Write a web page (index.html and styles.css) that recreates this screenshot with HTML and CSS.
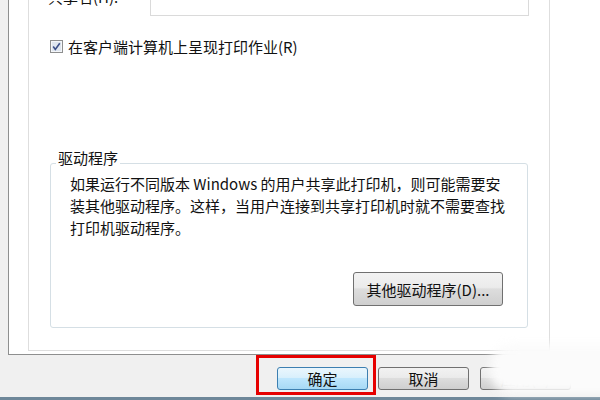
FILE: index.html
```html
<!DOCTYPE html>
<html lang="zh-CN">
<head>
    <meta charset="UTF-8">
    <title>打印机属性 - 共享</title>
    <link rel="stylesheet" href="styles.css">
</head>
<body>
    <div class="sheet">
        <div class="panel">
            <!-- 共享名 -->
            <div class="share-row">
                <span class="share-label">共享名(H):</span>
                <div class="share-field"></div>
            </div>

            <label class="check-row">
                <span class="checkbox">
                    <svg width="13" height="13" viewBox="0 0 13 13">
                        <rect x="0.5" y="0.5" width="12" height="12" fill="#f4f6f9" stroke="#8e8f8f"/>
                        <rect x="2" y="2" width="9" height="9" fill="#dfe6ef"/>
                        <path d="M3.2 6.6 L5.3 9.4 L9.8 3.2" fill="none" stroke="#3b4f88" stroke-width="1.6"/>
                    </svg>
                </span>
                <span>在客户端计算机上呈现打印作业(R)</span>
            </label>

            <!-- 驱动程序 -->
            <div class="group">
                <div class="group-title">驱动程序</div>
                <p class="group-text">如果运行不同版本 Windows 的用户共享此打印机，则可能需要安<br>装其他驱动程序。这样，当用户连接到共享打印机时就不需要查找<br>打印机驱动程序。</p>
                <button class="btn btn-driver">其他驱动程序(D)...</button>
            </div>
        </div>
    </div>

    <div class="footer">
        <span class="mark"><button class="btn btn-default">确定</button></span>
        <button class="btn btn-cancel">取消</button>
        <button class="btn btn-apply">应用(A)</button>
    </div>

    <div class="watermark"></div>
</body>
</html>
```

FILE: styles.css
```css
body {
    margin: 0;
    width: 600px;
    height: 400px;
    overflow: hidden;
    position: relative;
    background-color: #f0f0f0;
    font-family: "Noto Sans CJK SC", "Microsoft YaHei", sans-serif;
    font-size: 15px;
    color: #111;
}
.sheet {
    display: flex;
    flex-direction: column;
    margin-left: 8px;
    width: 620px;
    height: 354px;
    padding-left: 19px;
    background-color: #fff;
    border-left: 1px solid #8e8f8f;
    border-bottom: 1px solid #8e8f8f;
}
.panel {
    display: flex;
    flex-direction: column;
    box-sizing: border-box;
    width: 522px;
    height: 351px;
    padding-left: 19px;
    border: 1px solid #dedede;
    border-top: none;
}
.share-row {
    display: flex;
    height: 30px;
    margin-top: -14px;
}
.share-label {
    width: 102px;
    line-height: 20px;
    padding-top: 1px;
}
.share-field {
    box-sizing: border-box;
    width: 379px;
    height: 30px;
    border: 1px solid #dadada;
    background-color: #fff;
}
.check-row {
    display: flex;
    align-items: center;
    gap: 5px;
    height: 20px;
    margin: 20px 0 0 2px;
}
.checkbox {
    display: flex;
    width: 13px;
    height: 13px;
}
.group {
    display: flex;
    flex-direction: column;
    box-sizing: border-box;
    width: 478px;
    margin: 107px 0 0 2px;
    padding: 0 0 21px 19px;
    border: 1px solid #d5dfe5;
    border-radius: 3px;
}
.group-title {
    width: fit-content;
    margin: -16px 0 0 -14px;
    padding: 0 2px;
    line-height: 20px;
    background-color: #fff;
}
.group-text {
    margin: 5px 0 0;
    line-height: 22px;
    white-space: nowrap;
}
.btn {
    box-sizing: border-box;
    padding: 0;
    font-family: inherit;
    font-size: 15px;
    color: #111;
    border: 1px solid #707070;
    border-radius: 3px;
    background: linear-gradient(#f2f2f2 0%, #ebebeb 45%, #dddddd 50%, #cfcfcf 100%);
    cursor: pointer;
}
.btn-driver {
    align-self: flex-end;
    width: 150px;
    height: 34px;
    margin: 33px 24px 0 0;
}
.footer {
    display: flex;
    align-items: flex-start;
    height: 42px;
    border-bottom: 3px solid #6e8799;
}
.footer .btn {
    width: 91px;
    height: 23px;
    line-height: 21px;
}
.mark {
    display: flex;
    margin-left: 256px;
    padding: 9px 5px 2px 18px;
    border: 3px solid #e60000;
}
.btn-default {
    border-color: #3c7fb1;
    background: linear-gradient(#eaf6fd 0%, #d9f0fc 45%, #bee6fd 50%, #a7d9f5 100%);
}
.btn-cancel {
    margin: 12px 0 0 2px;
}
.btn-apply {
    margin: 12px 0 0 11px;
    color: #8a8a8a;
}
.watermark {
    position: absolute;
    left: 490px;
    top: 344px;
    width: 150px;
    height: 50px;
    background-color: #fbfbfb;
    border-radius: 22px;
    filter: blur(5px);
}
```
